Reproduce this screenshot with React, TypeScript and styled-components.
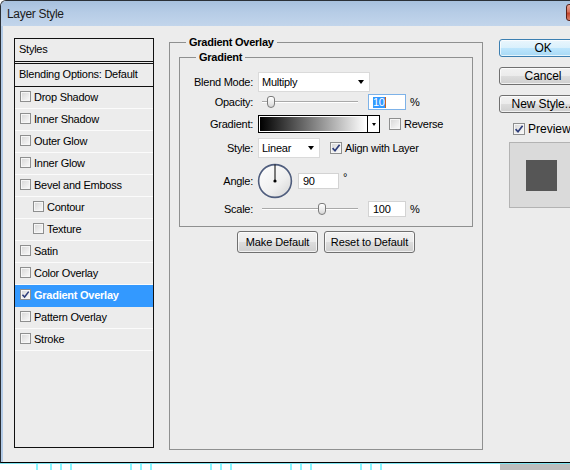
import React from "react";
import styled, { createGlobalStyle } from "styled-components";

const GlobalStyle = createGlobalStyle`
  html, body {
    margin: 0;
    padding: 0;
    background: #fff;
    overflow: hidden;
  }
  body {
    font-family: "Liberation Sans", Arial, sans-serif;
    font-size: 11px;
    letter-spacing: -0.25px;
    color: #000;
  }
  #root {
    width: 570px;
    height: 470px;
    overflow: hidden;
  }
`;

const layerStyles = [
  { name: "Drop Shadow" },
  { name: "Inner Shadow" },
  { name: "Outer Glow" },
  { name: "Inner Glow" },
  { name: "Bevel and Emboss" },
  { name: "Contour", sub: true },
  { name: "Texture", sub: true },
  { name: "Satin" },
  { name: "Color Overlay" },
  { name: "Gradient Overlay", checked: true, active: true },
  { name: "Pattern Overlay" },
  { name: "Stroke" },
];

const desktopTicks = [36, 50, 60, 70, 130, 140, 150, 210, 220, 230, 290, 300, 310, 360, 370, 380];

const Screen = styled.div`
  width: 570px;
  height: 470px;
  overflow: hidden;
  display: flex;
  flex-direction: column;
`;

const Window = styled.div`
  width: 613px;
  flex: none;
  border: 1px solid #2a2f36;
  border-right: none;
  border-bottom-color: #000;
  border-radius: 6px 6px 0 0;
  overflow: hidden;
`;

const TitleBar = styled.div`
  height: 25px;
  display: flex;
  align-items: center;
  padding-left: 6px;
  background: linear-gradient(180deg, #a7c0dd 0%, #b6cce6 45%, #c2d5eb 100%);
`;

const TitleText = styled.span`
  font-size: 12px;
  letter-spacing: -0.3px;
  color: #1b1b1b;
`;

const CloseButton = styled.span`
  width: 43px;
  height: 17px;
  margin-left: auto;
  margin-right: 5px;
  align-self: flex-start;
  margin-top: 3px;
  box-sizing: border-box;
  border: 1px solid #5b2016;
  border-radius: 3px;
  background: linear-gradient(180deg, #e8a493 0%, #d7735e 45%, #c3452d 55%, #d9826c 100%);
`;

const Body = styled.div`
  height: 436px;
  box-sizing: border-box;
  display: flex;
  align-items: flex-start;
  padding: 9px 0 0 13px;
  background: #ececec;
  box-shadow: inset 2px 0 0 #b3cbe7;
`;

/* left list of styles */
const StylesPanel = styled.div`
  width: 140px;
  height: 410px;
  margin-top: 3px;
  box-sizing: border-box;
  border: 1px solid #111;
  flex: none;
`;

const PanelHeader = styled.div`
  height: 23px;
  box-sizing: border-box;
  display: flex;
  align-items: center;
  padding: 0 0 2px 4px;
  border-bottom: 1px solid #111;
  margin-bottom: 1px;
`;

const BlendingRow = styled.div`
  height: 24px;
  box-sizing: border-box;
  display: flex;
  align-items: center;
  padding: 0 0 2px 4px;
  border-top: 1px solid #111;
  border-bottom: 1px solid #111;
`;

const StyleItem = styled.div<{ $sub?: boolean; $active?: boolean }>`
  height: 22px;
  box-sizing: border-box;
  display: flex;
  align-items: center;
  gap: 3px;
  padding: 0 0 2px ${(p) => (p.$sub ? 18 : 5)}px;
  border-bottom: 1px solid ${(p) => (p.$active ? "#3399ff" : "#fbfbfb")};
  background: ${(p) => (p.$active ? "#3399ff" : "transparent")};
  color: ${(p) => (p.$active ? "#fff" : "#000")};
  font-weight: ${(p) => (p.$active ? "bold" : "normal")};
`;

const CheckBox = styled.span<{ $size: number }>`
  width: ${(p) => p.$size}px;
  height: ${(p) => p.$size}px;
  flex: none;
  box-sizing: border-box;
  border: 1px solid #8e8f8f;
  background: linear-gradient(135deg, #d6d6d6 0%, #f0f0f0 70%, #fbfbfb 100%);
  box-shadow: inset 0 0 0 1px #f6f6f6;
  display: flex;
  align-items: center;
  justify-content: center;
`;

const Check = ({ size, checked }: { size: number; checked?: boolean }) => (
  <CheckBox $size={size}>
    {checked && (
      <svg width={size - 2} height={size - 2} viewBox="0 0 10 10">
        <path d="M1.6 5.2 L4 7.8 L8.6 1.8" fill="none" stroke="#2d3d7a" strokeWidth="1.7" />
      </svg>
    )}
  </CheckBox>
);

/* middle group boxes */
const GroupBox = styled.fieldset`
  margin: 0;
  min-width: 0;
  box-sizing: border-box;
  border: 1px solid #8f9090;
`;

const GroupTitle = styled.legend<{ $inset: number }>`
  margin-left: ${(p) => p.$inset}px;
  padding: 0 3px;
  font-weight: bold;
  line-height: 14px;
`;

const OverlayGroup = styled(GroupBox)`
  width: 314px;
  height: 415px;
  margin-left: 15px;
  padding: 1px 9px 0;
  flex: none;
`;

const GradientGroup = styled(GroupBox)`
  padding: 8px 0 9px;
`;

const FieldRow = styled.div<{ $h: number }>`
  height: ${(p) => p.$h}px;
  display: grid;
  grid-template-columns: 73px 1fr;
  column-gap: 5px;
  align-items: center;
`;

const FieldLabel = styled.span`
  text-align: right;
`;

const Controls = styled.div`
  display: flex;
  align-items: center;
`;

const SelectBox = styled.div<{ $w: number }>`
  width: ${(p) => p.$w}px;
  height: 20px;
  box-sizing: border-box;
  display: flex;
  align-items: center;
  padding-left: 3px;
  background: #fff;
  border: 1px solid #dadada;
`;

const DownArrow = styled.span<{ $small?: boolean }>`
  width: 0;
  height: 0;
  margin-left: auto;
  margin-right: ${(p) => (p.$small ? 3 : 5)}px;
  border-left: ${(p) => (p.$small ? 2.5 : 3.5)}px solid transparent;
  border-right: ${(p) => (p.$small ? 2.5 : 3.5)}px solid transparent;
  border-top: ${(p) => (p.$small ? 3 : 4)}px solid #000;
`;

const GradientPicker = styled.div`
  width: 122px;
  height: 18px;
  box-sizing: border-box;
  display: flex;
  border: 1px solid #000;
  background: #fff;
`;

const GradientFill = styled.div`
  flex: 1;
  margin: 1px;
  background: linear-gradient(to right, #000 0%, #fff 100%);
`;

const GradientDrop = styled.div`
  width: 11px;
  display: flex;
  align-items: center;
  border-left: 1px solid #000;
`;

const SliderTrack = styled.div<{ $w: number }>`
  position: relative;
  width: ${(p) => p.$w}px;
  height: 14px;
  margin-left: 4px;
  &::before {
    content: "";
    position: absolute;
    left: 0;
    right: 0;
    top: 6px;
    height: 1px;
    background: #a9a9a9;
    box-shadow: 0 1px 0 #fff;
  }
`;

const SliderThumb = styled.span`
  position: absolute;
  top: 1px;
  width: 8px;
  height: 12px;
  margin-left: -4px;
  box-sizing: border-box;
  border: 1px solid #7b7b7b;
  border-radius: 3px 3px 4px 4px;
  background: linear-gradient(180deg, #ffffff 0%, #e9e9e9 60%, #d6d6d6 100%);
`;

const NumberInput = styled.div<{ $w: number; $focus?: boolean; $gap: number }>`
  width: ${(p) => p.$w}px;
  height: 16px;
  margin-left: ${(p) => p.$gap}px;
  box-sizing: border-box;
  display: flex;
  align-items: center;
  padding-left: 4px;
  background: #fff;
  border: 1px solid ${(p) => (p.$focus ? "#7db2e8" : "#d3d3d3")};
`;

const Selected = styled.span`
  background: #3399ff;
  color: #fff;
  line-height: 11px;
`;

const Caret = styled.span`
  width: 1px;
  height: 11px;
  background: #c8641e;
`;

const Unit = styled.span<{ $raise?: boolean }>`
  margin-left: 4px;
  margin-bottom: ${(p) => (p.$raise ? 7 : 0)}px;
`;

const CheckLabel = styled.label<{ $gap: number }>`
  display: flex;
  align-items: center;
  gap: 3px;
  margin-left: ${(p) => p.$gap}px;
`;

const ButtonRow = styled.div`
  display: flex;
  justify-content: center;
  gap: 6px;
  margin-top: 4px;
`;

const PushButton = styled.button<{ $w: number; $h: number; $fs: number; $default?: boolean }>`
  width: ${(p) => p.$w}px;
  height: ${(p) => p.$h}px;
  padding: 0;
  box-sizing: border-box;
  font-family: "Liberation Sans", Arial, sans-serif;
  font-size: ${(p) => p.$fs}px;
  letter-spacing: -0.1px;
  color: #000;
  border-radius: 3px;
  border: 1px solid ${(p) => (p.$default ? "#3c7fb1" : "#707070")};
  background: ${(p) =>
    p.$default
      ? "linear-gradient(180deg, #eaf6fd 0%, #d9f0fc 50%, #bee6fd 50%, #a7d9f5 100%)"
      : "linear-gradient(180deg, #f2f2f2 0%, #ebebeb 50%, #dddddd 50%, #cfcfcf 100%)"};
  box-shadow: inset 0 0 0 1px rgba(255, 255, 255, 0.7);
  white-space: nowrap;
  overflow: hidden;
`;

/* right column */
const SideColumn = styled.div`
  width: 88px;
  margin-left: 16px;
  margin-top: 4px;
  display: flex;
  flex-direction: column;
  gap: 10px;
  flex: none;
`;

const PreviewToggle = styled.label`
  height: 12px;
  display: flex;
  align-items: center;
  gap: 3px;
  padding-left: 14px;
  font-size: 12px;
  letter-spacing: 0;
`;

const PreviewBox = styled.div`
  width: 65px;
  height: 66px;
  margin-left: 10px;
  margin-top: -3px;
  box-sizing: border-box;
  display: flex;
  align-items: center;
  justify-content: center;
  background: #dadada;
  border: 1px solid #b3b3b3;
`;

const PreviewSwatch = styled.div`
  width: 31px;
  height: 31px;
  background: #565656;
`;

const Desktop = styled.svg`
  display: block;
  flex: none;
`;

const AngleDial = () => (
  <svg width="36" height="36" viewBox="0 0 36 36" style={{ marginLeft: -1, flex: "none" }}>
    <defs>
      <linearGradient id="dialFill" x1="0" y1="0" x2="1" y2="1">
        <stop offset="0" stopColor="#ffffff" />
        <stop offset="0.6" stopColor="#efefef" />
        <stop offset="1" stopColor="#d2d2d2" />
      </linearGradient>
    </defs>
    <circle cx="18" cy="18" r="16.4" fill="url(#dialFill)" stroke="#4f5d7d" strokeWidth="1.6" />
    <line x1="18" y1="18" x2="18" y2="1.5" stroke="#000" strokeWidth="1" />
    <circle cx="18" cy="18" r="1.6" fill="#000" />
  </svg>
);

const App = () => {
  const opacityPos = 9.4;
  const scalePos = 62.5;

  return (
    <Screen>
      <GlobalStyle />
      <Window>
        <TitleBar>
          <TitleText>Layer Style</TitleText>
          <CloseButton />
        </TitleBar>
        <Body>
          <StylesPanel>
            <PanelHeader>Styles</PanelHeader>
            <BlendingRow>Blending Options: Default</BlendingRow>
            {layerStyles.map((s) => (
              <StyleItem key={s.name} $sub={s.sub} $active={s.active}>
                <Check size={11} checked={s.checked} />
                {s.name}
              </StyleItem>
            ))}
          </StylesPanel>

          <OverlayGroup>
            <GroupTitle $inset={7}>Gradient Overlay</GroupTitle>
            <GradientGroup>
              <GroupTitle $inset={16}>Gradient</GroupTitle>

              <FieldRow $h={20}>
                <FieldLabel>Blend Mode:</FieldLabel>
                <Controls>
                  <SelectBox $w={112}>
                    Multiply
                    <DownArrow />
                  </SelectBox>
                </Controls>
              </FieldRow>

              <FieldRow $h={20}>
                <FieldLabel>Opacity:</FieldLabel>
                <Controls>
                  <SliderTrack $w={96}>
                    <SliderThumb style={{ left: `${opacityPos}%` }} />
                  </SliderTrack>
                  <NumberInput $w={38} $gap={10} $focus>
                    <Selected>10</Selected>
                    <Caret />
                  </NumberInput>
                  <Unit>%</Unit>
                </Controls>
              </FieldRow>

              <FieldRow $h={24}>
                <FieldLabel>Gradient:</FieldLabel>
                <Controls>
                  <GradientPicker>
                    <GradientFill />
                    <GradientDrop>
                      <DownArrow $small />
                    </GradientDrop>
                  </GradientPicker>
                  <CheckLabel $gap={9}>
                    <Check size={12} />
                    Reverse
                  </CheckLabel>
                </Controls>
              </FieldRow>

              <FieldRow $h={24}>
                <FieldLabel>Style:</FieldLabel>
                <Controls>
                  <SelectBox $w={62}>
                    Linear
                    <DownArrow />
                  </SelectBox>
                  <CheckLabel $gap={10}>
                    <Check size={12} checked />
                    Align with Layer
                  </CheckLabel>
                </Controls>
              </FieldRow>

              <FieldRow $h={41}>
                <FieldLabel>Angle:</FieldLabel>
                <Controls>
                  <AngleDial />
                  <NumberInput $w={41} $gap={5}>
                    90
                  </NumberInput>
                  <Unit $raise>°</Unit>
                </Controls>
              </FieldRow>

              <FieldRow $h={16}>
                <FieldLabel>Scale:</FieldLabel>
                <Controls>
                  <SliderTrack $w={96}>
                    <SliderThumb style={{ left: `${scalePos}%` }} />
                  </SliderTrack>
                  <NumberInput $w={38} $gap={10}>
                    100
                  </NumberInput>
                  <Unit>%</Unit>
                </Controls>
              </FieldRow>
            </GradientGroup>

            <ButtonRow>
              <PushButton $w={81} $h={22} $fs={11}>
                Make Default
              </PushButton>
              <PushButton $w={91} $h={22} $fs={11}>
                Reset to Default
              </PushButton>
            </ButtonRow>
          </OverlayGroup>

          <SideColumn>
            <PushButton $w={88} $h={18} $fs={12} $default>
              OK
            </PushButton>
            <PushButton $w={88} $h={18} $fs={12}>
              Cancel
            </PushButton>
            <PushButton $w={88} $h={18} $fs={12}>
              New Style...
            </PushButton>
            <PreviewToggle>
              <Check size={12} checked />
              Preview
            </PreviewToggle>
            <PreviewBox>
              <PreviewSwatch />
            </PreviewBox>
          </SideColumn>
        </Body>
      </Window>

      <Desktop width="570" height="7" viewBox="0 0 570 7">
        <rect x="0" y="0" width="570" height="1" fill="#7fe3ef" />
        <rect x="500" y="1" width="70" height="6" fill="#bdbdbd" />
        {desktopTicks.map((x) => (
          <rect key={x} x={x} y="1" width="2" height="6" fill="#86f6ff" />
        ))}
      </Desktop>
    </Screen>
  );
};

export default App;
